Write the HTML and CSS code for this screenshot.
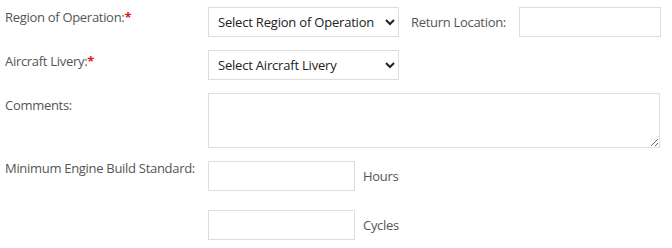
FILE: index.html
```html
<!DOCTYPE html>
<html lang="en">
<head>
    <meta charset="UTF-8">
    <title>Aircraft Request</title>
    <link rel="stylesheet" href="styles.css">
</head>
<body>
    <form class="request-form">
        <div class="form-row">
            <label class="field-label">Region of Operation:<span class="req">*</span></label>
            <select class="field-select">
                <option>Select Region of Operation</option>
            </select>
            <label class="field-label inline-label">Return Location:</label>
            <input type="text" class="field-input return-input">
        </div>
        <div class="form-row">
            <label class="field-label label-livery">Aircraft Livery:<span class="req">*</span></label>
            <select class="field-select">
                <option>Select Aircraft Livery</option>
            </select>
        </div>
        <div class="form-row">
            <label class="field-label label-comments">Comments:</label>
            <textarea class="field-textarea"></textarea>
        </div>
        <div class="form-row">
            <label class="field-label label-engine">Minimum Engine Build Standard:</label>
            <div class="engine-group">
                <div class="unit-row">
                    <input type="text" class="field-input unit-input">
                    <span class="unit-label">Hours</span>
                </div>
                <div class="unit-row">
                    <input type="text" class="field-input unit-input">
                    <span class="unit-label">Cycles</span>
                </div>
            </div>
        </div>
    </form>
</body>
</html>
```

FILE: styles.css
```css
/* General Reset */
body, html {
    margin: 0;
    padding: 0;
    background-color: #FFFFFF;
    font-family: "Open Sans", Arial, sans-serif;
    color: #555555;
}

.request-form {
    padding: 7px 0 0 5px;
    display: flex;
    flex-direction: column;
    gap: 13px;
}

.form-row {
    display: flex;
    align-items: flex-start;
}

/* Labels */
.field-label {
    width: 203px;
    flex-shrink: 0;
    font-size: 13px;
    letter-spacing: -0.3px;
    line-height: 20px;
    color: #555555;
}

.label-livery {
    padding-top: 1px;
}

.label-comments {
    padding-top: 2px;
}

.label-engine {
    margin-top: -3px;
}

.req {
    color: #e0161b;
    font-weight: bold;
}

/* Dropdowns */
.field-select {
    width: 191px;
    height: 30px;
    border: 1px solid #dddddd;
    border-radius: 0;
    background-color: #FFFFFF;
    font-family: "Open Sans", Arial, sans-serif;
    font-size: 13px;
    letter-spacing: -0.2px;
    color: #222222;
    padding: 0 5px;
    margin: 0;
}

.inline-label {
    margin-left: 12px;
    line-height: 30px;
    width: 108px;
}

.field-input {
    height: 30px;
    box-sizing: border-box;
    border: 1px solid #dddddd;
    padding: 0 6px;
    margin: 0;
    font-family: "Open Sans", Arial, sans-serif;
    font-size: 13px;
}

.return-input {
    width: 142px;
}

.field-textarea {
    width: 452px;
    height: 55px;
    box-sizing: border-box;
    border: 1px solid #dddddd;
    padding: 4px 6px;
    margin: 0;
    display: block;
    resize: both;
    font-family: "Open Sans", Arial, sans-serif;
}

/* Engine build standard */
.engine-group {
    display: flex;
    flex-direction: column;
    gap: 19px;
}

.unit-row {
    display: flex;
    align-items: center;
    gap: 8px;
}

.unit-input {
    width: 147px;
}

.unit-label {
    font-size: 13px;
    letter-spacing: -0.3px;
    color: #555555;
}
```
